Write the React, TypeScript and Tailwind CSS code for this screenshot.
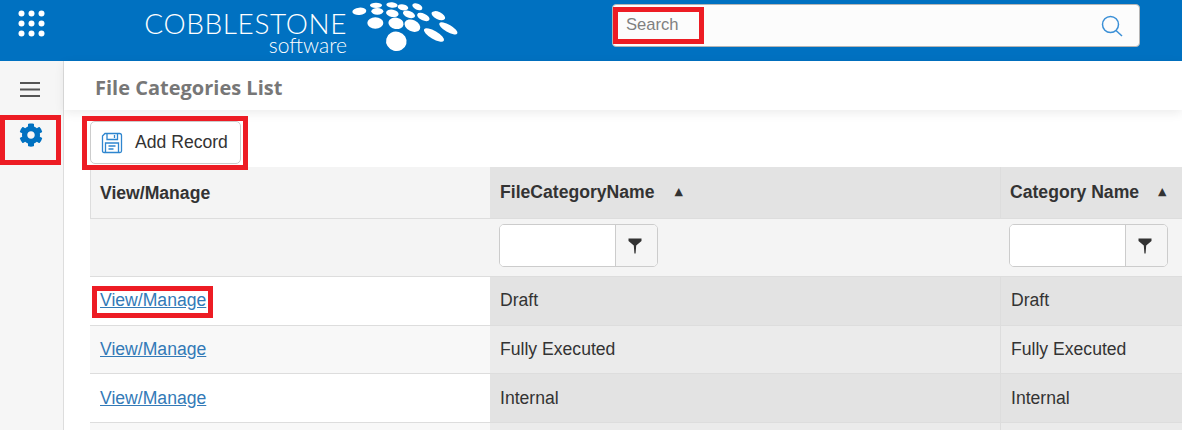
import { FaCog } from "react-icons/fa";

const rows = [
  { name: "Draft", h: "h-[49px]", alt: false, pad: "pb-[1px]" },
  { name: "Fully Executed", h: "h-[48px]", alt: true, pad: "" },
  { name: "Internal", h: "h-[49px]", alt: false, pad: "" },
  { name: "", h: "h-[49px]", alt: true, pad: "" },
];

const dots = [
  [58, 34, 21, 11, -5], [108, 16, 18, 8, 0], [156, 15, 17, 8, 5], [189, 22, 16, 9, 10],
  [232, 20, 16, 9, 25], [112, 34, 18, 10, 0], [157, 40, 19, 11, 10], [207, 43, 19, 10, 20],
  [250, 51, 20, 10, 25], [295, 47, 22, 11, 25], [106, 69, 24, 17, 0], [168, 70, 23, 17, 10],
  [217, 77, 25, 17, 25], [282, 105, 34, 12, 30], [325, 85, 31, 11, 30], [169, 124, 31, 29, 15],
];

function FilterBox() {
  return (
    <div className="flex h-[43px] w-[159px] overflow-hidden rounded-[5px] border border-[#cccccc] bg-white">
      <div className="flex-1 bg-white" />
      <div className="flex w-[42px] items-center justify-center border-l border-[#cccccc] bg-[#f5f5f5] pr-[3px]">
        <svg width="14" height="16" viewBox="0 0 14 16">
          <path d="M0.5 0.5H13.5V3L8.2 7.5L7.6 15.5H6.4L5.8 7.5L0.5 3Z" fill="#333333" />
        </svg>
      </div>
    </div>
  );
}

function HeaderLabel({ text, gap }: { text: string; gap: string }) {
  return (
    <div className={`flex items-center ${gap}`}>
      <span className="font-bold text-[#333333]">{text}</span>
      <span className="font-['DejaVu_Sans',sans-serif] text-[11px] text-[#333333]">▲</span>
    </div>
  );
}

export default function App() {
  return (
    <div className="relative flex h-[430px] w-[1182px] flex-col overflow-hidden bg-white font-['Liberation_Sans',Arial,sans-serif] text-[17.6px] text-[#333333]">
      {/* Header */}
      <header className="flex h-[61px] shrink-0 items-start bg-[#0071c1]">
        <div className="flex h-[61px] w-[63px] shrink-0 items-start pl-[18px] pt-[10px]">
          <svg width="28" height="28" viewBox="0 0 28 28" fill="#ffffff">
            {[3.5, 13.5, 23.5].map((cy) =>
              [3.5, 13.5, 23.5].map((cx) => <circle key={`${cx}-${cy}`} cx={cx} cy={cy} r="3" />)
            )}
          </svg>
        </div>
        <div className="ml-[82px] flex h-[61px] w-[202px] shrink-0 flex-col items-end text-white">
          <span className="mt-[11px] font-['Lato',sans-serif] text-[28px] font-light leading-[24px] tracking-[0.6px] whitespace-nowrap">
            COBBLESTONE
          </span>
          <span className="font-['Lato',sans-serif] text-[21px] font-light leading-[20px] whitespace-nowrap">
            software
          </span>
        </div>
        <svg className="-ml-[7px] shrink-0" width="130" height="60" viewBox="0 0 390 180" fill="#ffffff">
          {dots.map(([cx, cy, rx, ry, r], i) => (
            <ellipse key={i} cx={cx} cy={cy} rx={rx} ry={ry} transform={`rotate(${r} ${cx} ${cy})`} />
          ))}
        </svg>
        <div className="ml-[142px] mt-[4px] flex h-[43px] w-[528px] shrink-0 items-center justify-between rounded-[4px] border border-[#b5b5b5] bg-[#fcfcfc] pl-[13px] pr-[16px]">
          <span className="text-[16.6px] text-[#808080]">Search</span>
          <svg width="22" height="22" viewBox="0 0 22 22" fill="none" stroke="#3a8fd6" strokeWidth="1.5">
            <circle cx="9.5" cy="9.5" r="8" />
            <path d="M15 15.5L21 21" />
          </svg>
        </div>
      </header>

      <div className="flex min-h-0 flex-1">
        {/* Sidebar */}
        <aside className="flex w-[64px] shrink-0 flex-col items-center border-r border-[#dddddd] bg-[#f6f6f6] pr-[4px]">
          <svg className="mt-[21px]" width="20" height="15" viewBox="0 0 20 15" fill="#555555">
            <rect y="0" width="20" height="2" />
            <rect y="6.5" width="20" height="2" />
            <rect y="13" width="20" height="2" />
          </svg>
          <FaCog className="ml-[3px] mt-[26px] text-[#0071c1]" size={24} />
        </aside>

        {/* Main */}
        <main className="min-w-0 flex-1">
          <div className="relative flex h-[49px] items-center pl-[31px] pt-[4px] shadow-[0_3px_10px_rgba(0,0,0,0.08)]">
            <h1 className="font-['Open_Sans',sans-serif] text-[20px] font-bold text-[#777777]">File Categories List</h1>
          </div>
          <div className="pl-[26px]">
            <button className="mt-[11px] flex h-[43px] w-[151px] items-center rounded-[5px] border border-[#cccccc] bg-white pl-[10px] text-[#333333]">
              <svg width="22" height="22" viewBox="0 0 22 22" fill="none" stroke="#2f86cf" strokeWidth="1.3">
                <path d="M1.5 4L4 1.5H18.5Q20.5 1.5 20.5 3.5V19Q20.5 20.5 19 20.5H3Q1.5 20.5 1.5 19Z" />
                <path d="M6 1.5V7.5H16.5V1.5" />
                <path d="M13.5 3V6" />
                <path d="M4.5 20.5V11H17.5V20.5" />
                <path d="M7.5 14H14.5M7.5 17H12.5" />
              </svg>
              <span className="ml-[12px]">Add Record</span>
            </button>

            <div className="mt-[3px] w-[1110px]">
              <div className="flex h-[52px] border-b border-[#dddddd]">
                <div className="flex w-[400px] items-center border-l border-[#dddddd] bg-[#f4f4f4] pl-[9px] pt-[1px] font-bold">View/Manage</div>
                <div className="flex w-[511px] items-center border-r border-[#dddddd] bg-[#e3e3e3] pl-[10px]">
                  <HeaderLabel text="FileCategoryName" gap="gap-[20px]" />
                </div>
                <div className="flex flex-1 items-center bg-[#e3e3e3] pl-[9px]">
                  <HeaderLabel text="Category Name" gap="gap-[19px]" />
                </div>
              </div>
              <div className="flex h-[58px] border-b border-[#dddddd] bg-[#f4f4f4]">
                <div className="w-[400px]" />
                <div className="w-[510px] pl-[9px] pt-[5px]">
                  <FilterBox />
                </div>
                <div className="flex-1 pl-[9px] pt-[5px]">
                  <FilterBox />
                </div>
              </div>
              {rows.map((r, i) => (
                <div key={i} className={`flex ${r.h} border-b border-[#dddddd]`}>
                  <div className={`flex w-[400px] items-center pl-[10px] ${r.pad} ${r.alt ? "bg-[#f8f8f8]" : "bg-white"}`}>
                    {r.name && <a className="text-[#337ab7] underline">View/Manage</a>}
                  </div>
                  <div className={`flex w-[511px] items-center border-r border-[#dddddd] pl-[10px] ${r.pad} ${r.alt ? "bg-[#ebebeb]" : "bg-[#e3e3e3]"}`}>
                    {r.name}
                  </div>
                  <div className={`flex flex-1 items-center pl-[10px] ${r.pad} ${r.alt ? "bg-[#ebebeb]" : "bg-[#e3e3e3]"}`}>
                    {r.name}
                  </div>
                </div>
              ))}
            </div>
          </div>
        </main>
      </div>

      {/* Red annotation frames drawn over the page */}
      <div className="absolute left-[613px] top-[7px] h-[37px] w-[91px] border-[5px] border-[#ed1c24]" />
      <div className="absolute left-0 top-[115px] h-[50px] w-[61px] border-[5px] border-[#ed1c24]" />
      <div className="absolute left-[82px] top-[116px] h-[54px] w-[166px] border-[5px] border-[#ed1c24]" />
      <div className="absolute left-[92px] top-[286px] h-[32px] w-[121px] border-[5px] border-[#ed1c24]" />
    </div>
  );
}
